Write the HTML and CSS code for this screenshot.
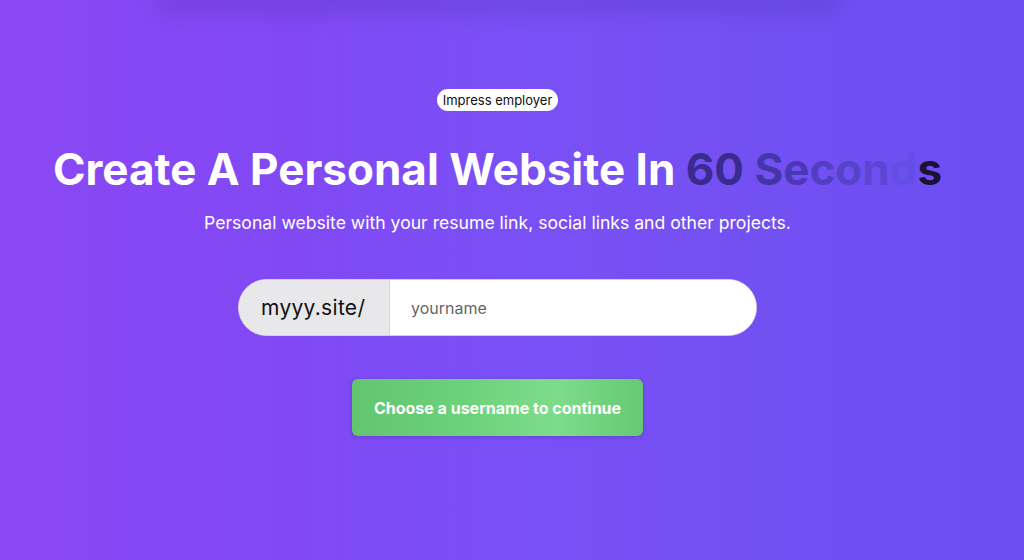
FILE: index.html
```html
<!DOCTYPE html>
<html lang="en">
<head>
<meta charset="utf-8">
<title>myyy.site</title>
<link rel="stylesheet" href="styles.css">
</head>
<body>
<div class="page">
  <div class="topshade"></div>
  <main class="hero">
    <span class="badge">Impress employer</span>
    <h1 class="title">Create A Personal Website In <span class="c60">60</span> <span class="l1">S</span><span class="l2">e</span><span class="l3">c</span><span class="l4">o</span><span class="l5">n</span><span class="l6">d</span><span class="l7">s</span></h1>
    <p class="subtitle">Personal website with your resume link, social links and other projects.</p>
    <div class="field">
      <span class="prefix">myyy.site/</span>
      <input class="name" type="text" placeholder="yourname">
    </div>
    <button class="cta" type="button">Choose a username to continue</button>
  </main>
</div>
</body>
</html>
```
FILE: styles.css
```css
* { box-sizing: border-box; }
html, body { margin: 0; padding: 0; }
body {
  font-family: Inter, "Noto Sans", "DejaVu Sans", sans-serif;
  background: linear-gradient(90deg, #8b48f4 0%, #8049f4 30%, #7a50f6 50%, #7350f2 75%, #6a4ef2 100%);
  width: 1024px;
  height: 560px;
  overflow: hidden;
}
.page {
  height: 560px;
  padding-right: 29px;
}
.topshade {
  width: 660px;
  height: 0;
  margin: 0 auto;
  box-shadow: 0 0 22px 10px rgba(70, 40, 160, 0.28);
}
.hero {
  display: flex;
  flex-direction: column;
  align-items: center;
  padding-top: 89px;
}
.badge {
  background: #fff;
  color: #111;
  font-size: 13px;
  line-height: 22px;
  height: 22px;
  padding: 0 6px;
  border-radius: 11px;
}
.title {
  margin: 29px 0 0;
  color: #fff;
  font-size: 44px;
  font-weight: 700;
  letter-spacing: 0;
  line-height: 58px;
  white-space: nowrap;
}
.c60 { color: #3a2b8e; }
.l1 { color: #4535aa; }
.l2 { color: #4a38b4; }
.l3 { color: #503fc0; }
.l4 { color: #5543c8; }
.l5 { color: #5a46d2; }
.l6 { color: #644ee6; }
.l7 { color: #1a1233; }
.subtitle {
  margin: 13px 0 0;
  color: #fff;
  font-size: 17.6px;
  line-height: 24px;
}
.field {
  margin-top: 44px;
  width: 519px;
  height: 57px;
  display: flex;
  border-radius: 29px;
  overflow: hidden;
  border: 1px solid #d4d0e0;
  background: #fff;
}
.prefix {
  width: 151px;
  background: #e8e8ea;
  border-right: 1px solid #d8d8dc;
  color: #111;
  font-size: 21px;
  letter-spacing: 0.3px;
  display: flex;
  align-items: center;
  padding-left: 22px;
}
.name {
  flex: 1;
  border: 0;
  outline: 0;
  background: #fff;
  font-family: inherit;
  font-size: 16px;
  padding-left: 21px;
  color: #333;
}
.name::placeholder { color: #666; }
.cta {
  margin-top: 43px;
  width: 291px;
  height: 57px;
  border: 0;
  border-radius: 6px;
  background: linear-gradient(90deg, #62c56f 0%, #6dd27c 40%, #7ddc8a 70%, #66c973 100%);
  color: #fff;
  font-family: inherit;
  font-size: 16px;
  font-weight: 700;
  box-shadow: 0 1px 4px rgba(40, 20, 120, 0.25);
}
```
